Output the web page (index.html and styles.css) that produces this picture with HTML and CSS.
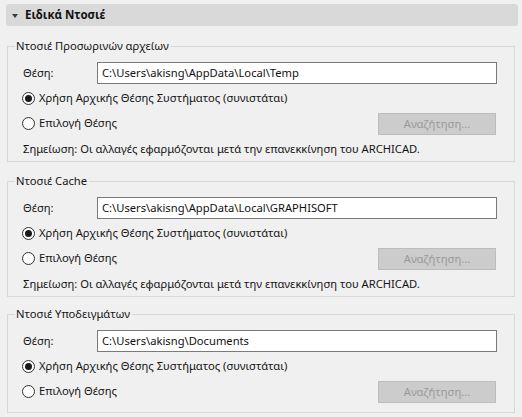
FILE: index.html
```html
<!DOCTYPE html>
<html lang="el">
<head>
<meta charset="utf-8">
<title>Ειδικά Ντοσιέ</title>
<link rel="stylesheet" href="styles.css">
</head>
<body>
<div class="panel">
  <div class="header">
    <span class="tri"></span>
    <span class="title">Ειδικά Ντοσιέ</span>
  </div>

  <fieldset class="group">
    <legend>Ντοσιέ Προσωρινών αρχείων</legend>
    <div class="row path-row">
      <span class="lbl">Θέση:</span>
      <div class="path">C:\Users\akisng\AppData\Local\Temp</div>
    </div>
    <div class="row radio-row">
      <span class="radio on"></span>
      <span>Χρήση Αρχικής Θέσης Συστήματος (συνιστάται)</span>
    </div>
    <div class="row radio-row btn-row">
      <span class="radio"></span>
      <span class="grow">Επιλογή Θέσης</span>
      <span class="btn">Αναζήτηση...</span>
    </div>
    <div class="note">Σημείωση: Οι αλλαγές εφαρμόζονται μετά την επανεκκίνηση του ARCHICAD.</div>
  </fieldset>

  <fieldset class="group">
    <legend>Ντοσιέ Cache</legend>
    <div class="row path-row">
      <span class="lbl">Θέση:</span>
      <div class="path">C:\Users\akisng\AppData\Local\GRAPHISOFT</div>
    </div>
    <div class="row radio-row">
      <span class="radio on"></span>
      <span>Χρήση Αρχικής Θέσης Συστήματος (συνιστάται)</span>
    </div>
    <div class="row radio-row btn-row">
      <span class="radio"></span>
      <span class="grow">Επιλογή Θέσης</span>
      <span class="btn">Αναζήτηση...</span>
    </div>
    <div class="note">Σημείωση: Οι αλλαγές εφαρμόζονται μετά την επανεκκίνηση του ARCHICAD.</div>
  </fieldset>

  <fieldset class="group last">
    <legend>Ντοσιέ Υποδειγμάτων</legend>
    <div class="row path-row">
      <span class="lbl">Θέση:</span>
      <div class="path">C:\Users\akisng\Documents</div>
    </div>
    <div class="row radio-row">
      <span class="radio on"></span>
      <span>Χρήση Αρχικής Θέσης Συστήματος (συνιστάται)</span>
    </div>
    <div class="row radio-row btn-row">
      <span class="radio"></span>
      <span class="grow">Επιλογή Θέσης</span>
      <span class="btn">Αναζήτηση...</span>
    </div>
  </fieldset>
</div>
</body>
</html>
```

FILE: styles.css
```css
html, body {
  margin: 0;
  padding: 0;
  background: #f0f0f0;
}
body {
  font-family: "Noto Sans", "Open Sans", sans-serif;
  font-size: 11.2px;
  line-height: 16px;
  color: #141414;
  width: 522px;
  height: 417px;
  overflow: hidden;
}
.panel {
  padding-top: 4px;
}
.header {
  margin: 0 4px 0 6px;
  height: 22px;
  background: #d9d9d9;
  border-radius: 3px;
  display: flex;
  align-items: center;
  padding-left: 6px;
  gap: 7px;
}
.tri {
  width: 0;
  height: 0;
  border-left: 3.5px solid transparent;
  border-right: 3.5px solid transparent;
  border-top: 4px solid #3c3c3c;
  margin-top: 1px;
}
.title {
  font-weight: bold;
  font-size: 11.5px;
  color: #111;
}
.group {
  margin: 12px 7px 0 7px;
  border: 1px solid #d8d8d8;
  padding: 8px 17px 4px 15px;
  min-width: 0;
}
.group + .group {
  margin-top: 11px;
}
.group.last {
  margin-top: 9px;
  padding-bottom: 10px;
}
legend {
  padding: 0 2px 0 1px;
  margin-left: -8px;
  line-height: 16px;
  color: #141414;
}
.row {
  display: flex;
  align-items: center;
}
.path-row {
  height: 22px;
}
.lbl {
  width: 74px;
}
.path {
  flex: 1;
  height: 20px;
  border: 1px solid #7a7a7a;
  background: #fff;
  padding-left: 4px;
  line-height: 20px;
  color: #111;
}
.radio-row {
  margin-top: 4px;
  height: 20px;
  margin-left: -1px;
  gap: 4px;
}
.btn-row {
  height: 22px;
  margin-top: 4px;
}
.grow {
  flex: 1;
}
.radio {
  width: 11px;
  height: 11px;
  border: 1px solid #333;
  border-radius: 50%;
  background: #fff;
  flex: none;
  display: flex;
  align-items: center;
  justify-content: center;
}
.radio.on::after {
  content: "";
  width: 7px;
  height: 7px;
  border-radius: 50%;
  background: #1a1a1a;
}
.btn {
  width: 116px;
  height: 20px;
  border: 1px solid #bdbdbd;
  background: #cccccc;
  color: #9a9a9a;
  text-align: center;
  line-height: 20px;
  margin-right: 1px;
  margin-top: 2px;
}
.note {
  margin-top: 7px;
  height: 16px;
}
```
